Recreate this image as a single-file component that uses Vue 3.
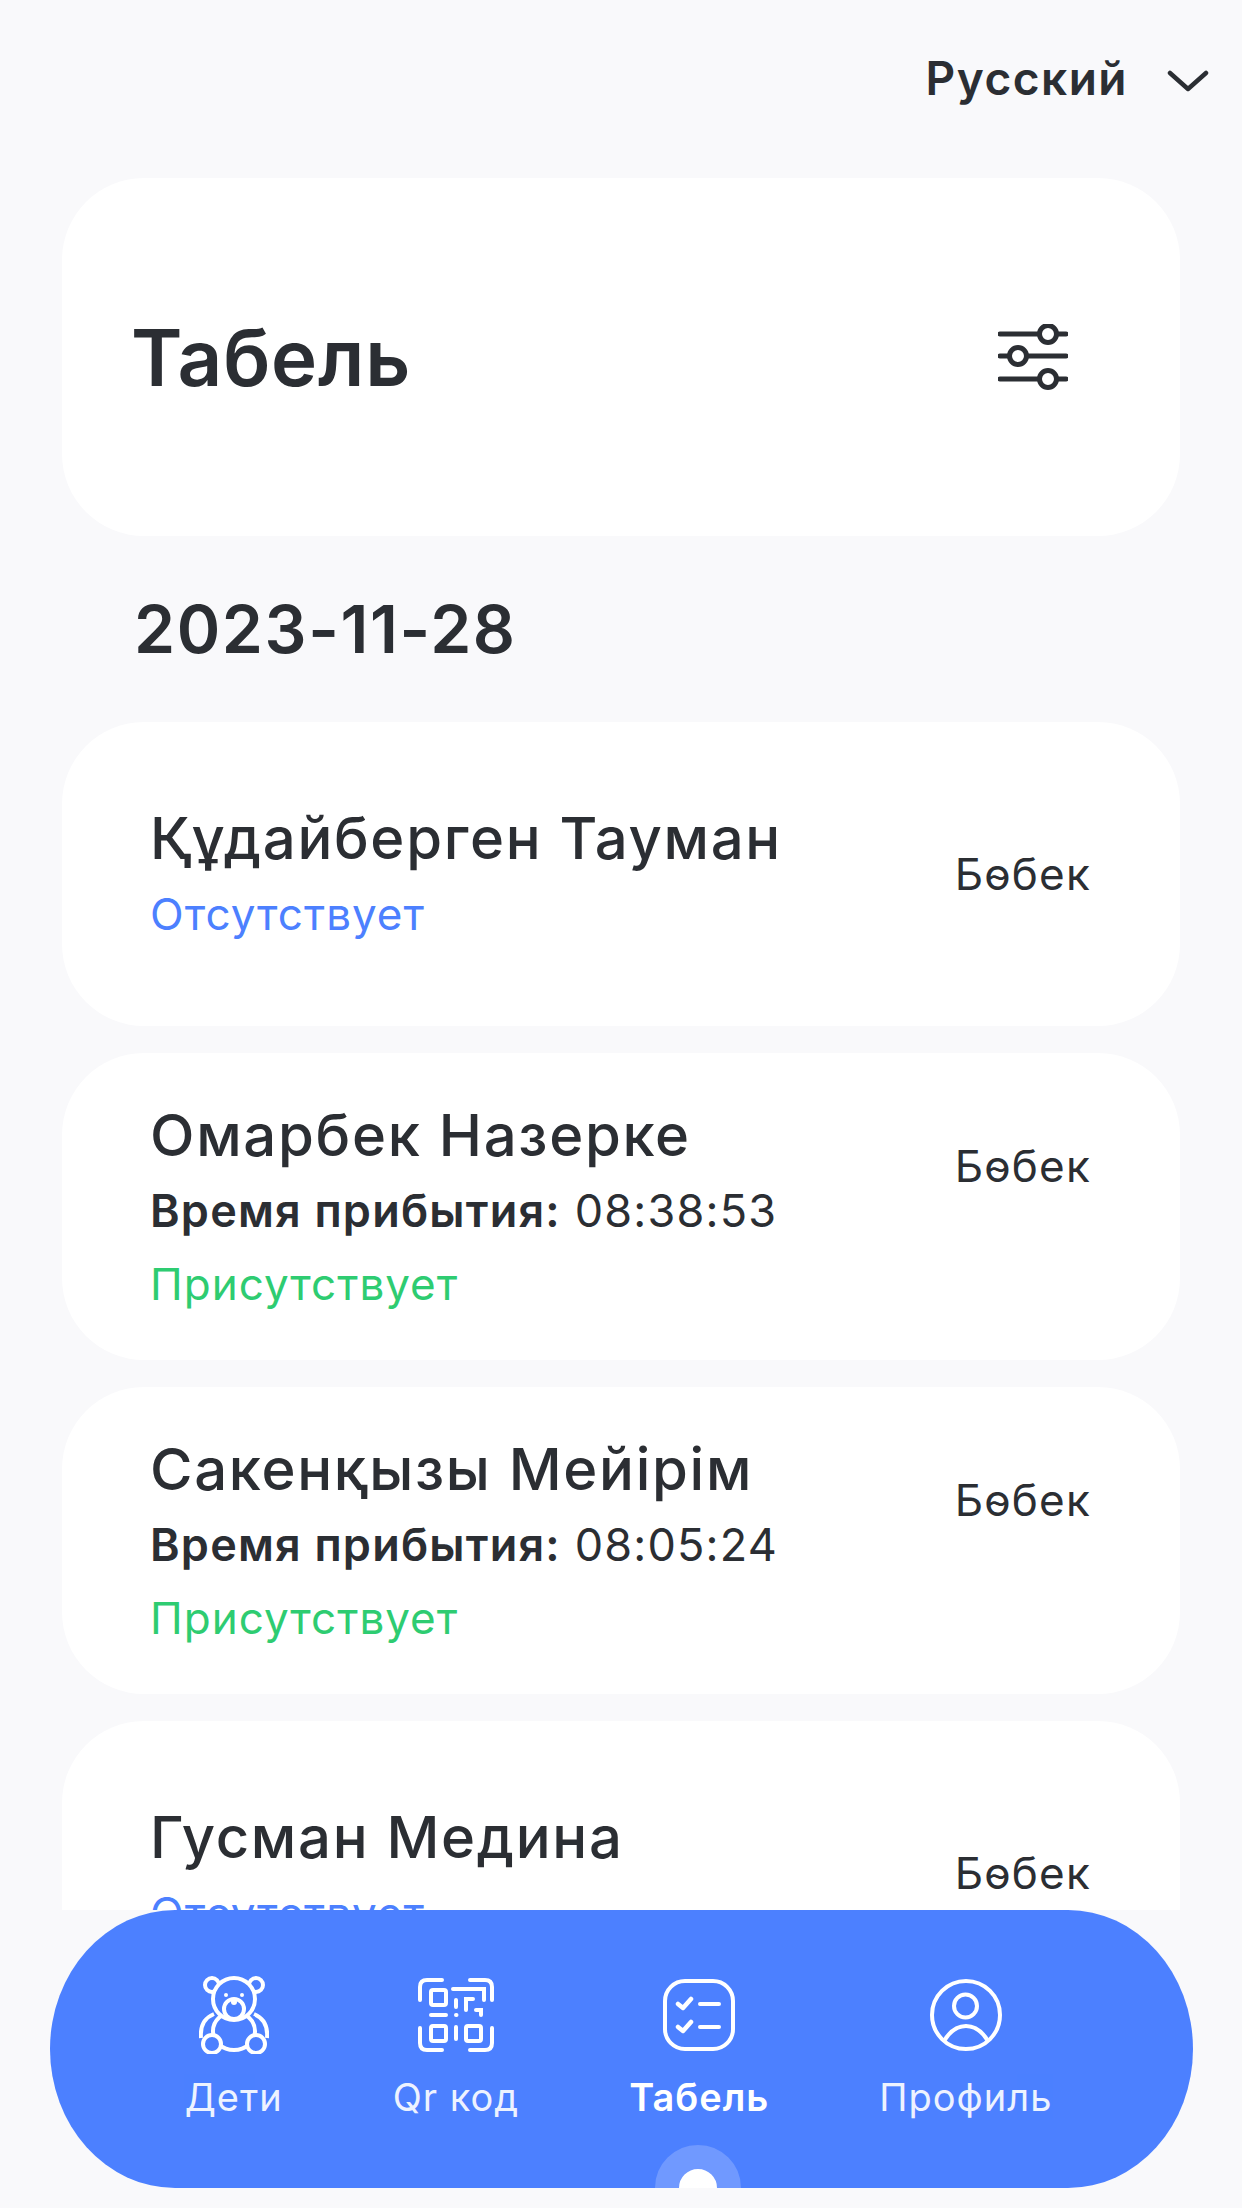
<script setup>
const children = [
  { name: 'Құдайберген Тауман', present: false },
  { name: 'Омарбек Назерке', present: true, time: '08:38:53' },
  { name: 'Сакенқызы Мейірім', present: true, time: '08:05:24' },
  { name: 'Гусман Медина', present: false },
]
</script>

<template>
  <div class="page">
    <div class="scroll">
      <div class="lang">
        <span>Русский</span>
        <svg class="chevron" width="42" height="22" viewBox="0 0 42 22" fill="none" stroke="#2b2e33" stroke-width="4.5" stroke-linecap="round" stroke-linejoin="round">
          <path d="M3 3 L21 19 L39 3" />
        </svg>
      </div>

      <div class="head-card">
        <h1>Табель</h1>
        <svg width="70" height="66" viewBox="0 0 70 66" fill="none" stroke="#2b2e33" stroke-width="5" stroke-linecap="round">
          <path d="M2 10 H41 M59 10 H68 M2 32 H11 M29 32 H68 M2 55 H41 M59 55 H68" />
          <circle cx="50" cy="10" r="8.5" />
          <circle cx="20" cy="32" r="8.5" />
          <circle cx="50" cy="55" r="8.5" />
        </svg>
      </div>

      <div class="date">2023-11-28</div>

      <div class="list">
        <div v-for="child in children" :key="child.name" class="card" :class="{ present: child.present }">
          <div class="row">
            <div class="info">
              <div class="name">{{ child.name }}</div>
              <div v-if="child.present" class="time"><b>Время прибытия:</b> {{ child.time }}</div>
              <div v-else class="status absent">Отсутствует</div>
            </div>
            <div class="group">Бөбек</div>
          </div>
          <div v-if="child.present" class="status here">Присутствует</div>
        </div>
      </div>
    </div>

    <nav class="nav">
      <div class="tab">
        <svg width="70" height="78" viewBox="0 0 70 78" fill="none" stroke="#fff" stroke-width="4">
          <circle cx="13" cy="9" r="7" />
          <circle cx="57" cy="9" r="7" />
          <path d="M15 38 C5 42 1 50 2 62 M55 38 C65 42 69 50 68 62" />
          <ellipse cx="35" cy="55" rx="21" ry="19" />
          <circle cx="35" cy="23" r="21" fill="#4c80ff" />
          <circle cx="35" cy="33" r="10" />
          <circle cx="35" cy="26" r="3" fill="#fff" stroke="none" />
          <circle cx="27" cy="19" r="2" fill="#fff" stroke="none" />
          <circle cx="43" cy="19" r="2" fill="#fff" stroke="none" />
          <circle cx="13" cy="68" r="9" fill="#4c80ff" />
          <circle cx="57" cy="68" r="9" fill="#4c80ff" />
        </svg>
        <span>Дети</span>
      </div>
      <div class="tab">
        <svg width="76" height="74" viewBox="0 0 76 74" fill="none" stroke="#fff" stroke-width="4" stroke-linecap="round">
          <path d="M24 2 H9 Q2 2 2 9 V22 M52 2 H67 Q74 2 74 9 V22 M2 50 V65 Q2 72 9 72 H24 M74 50 V65 Q74 72 67 72 H52" />
          <rect x="13" y="12" width="15" height="15" rx="2" />
          <rect x="13" y="48" width="15" height="15" rx="2" />
          <rect x="48" y="48" width="15" height="15" rx="2" />
          <path d="M38 22 V29 M38 49 V61 M13 37 H28 M38 37 H38.5 M35 11 H66 V22 M48 32 V21 H55 M58 32 H63 V37" />
        </svg>
        <span>Qr код</span>
      </div>
      <div class="tab active">
        <svg width="72" height="72" viewBox="0 0 72 72" fill="none" stroke="#fff" stroke-width="4" stroke-linecap="round" stroke-linejoin="round">
          <rect x="2" y="2" width="68" height="68" rx="20" />
          <path d="M37 25 H56 M37 48 H56" />
          <path d="M15 25 L20 29 L28 20 M15 48 L20 52 L28 43" stroke-width="4.5" />
        </svg>
        <span>Табель</span>
      </div>
      <div class="tab">
        <svg width="72" height="72" viewBox="0 0 72 72" fill="none" stroke="#fff" stroke-width="4">
          <circle cx="36" cy="36" r="34" />
          <circle cx="35.5" cy="27" r="11.5" />
          <path d="M14 62 C20 52 28 47 36 47 C44 47 52 52 58 62" />
        </svg>
        <span>Профиль</span>
      </div>
      <div class="dot"></div>
    </nav>
  </div>
</template>

<style>
html,
body {
  margin: 0;
  background: #f9f9fb;
}
</style>

<style scoped>
.page {
  height: 2208px;
  display: flex;
  flex-direction: column;
  background: #f9f9fb;
  color: #2b2e33;
  font-family: Inter, "Noto Sans", sans-serif;
  overflow: hidden;
}

.scroll {
  height: 1910px;
  flex-shrink: 0;
  overflow: hidden;
}

.lang {
  height: 178px;
  box-sizing: border-box;
  padding: 53px 33px 0 0;
  display: flex;
  justify-content: flex-end;
  align-items: flex-start;
  gap: 39px;
  font-size: 46px;
  line-height: 50px;
  font-weight: 600;
  letter-spacing: 1.5px;
}

.chevron {
  margin-top: 17px;
}

.head-card {
  margin: 0 62px;
  height: 358px;
  background: #fff;
  border-radius: 82px;
  display: flex;
  align-items: center;
  justify-content: space-between;
  padding: 0 112px 0 69px;
  box-sizing: border-box;
}

.head-card h1 {
  margin: 0;
  font-size: 78px;
  font-weight: 600;
  letter-spacing: 0.8px;
}

.date {
  height: 186px;
  line-height: 186px;
  padding-left: 134px;
  font-size: 66px;
  font-weight: 600;
  letter-spacing: 1.6px;
}

.list {
  margin: 0 62px;
  display: flex;
  flex-direction: column;
  gap: 27px;
}

.card {
  flex-shrink: 0;
  height: 304px;
  box-sizing: border-box;
  background: #fff;
  border-radius: 82px;
  padding: 0 89px 0 88px;
  display: flex;
  flex-direction: column;
  justify-content: center;
}

.card.present {
  height: 307px;
  justify-content: flex-start;
  padding-top: 47px;
}

.row {
  display: flex;
  align-items: center;
  justify-content: space-between;
}

.name {
  font-size: 58px;
  line-height: 70px;
  font-weight: 550;
  letter-spacing: 1.7px;
}

.time {
  margin-top: 9px;
  font-size: 45px;
  line-height: 64px;
  letter-spacing: 1.2px;
}

.time b {
  font-weight: 600;
}

.status {
  margin-top: 9px;
  font-size: 44px;
  line-height: 64px;
  letter-spacing: 1px;
}

.absent {
  color: #4c80ff;
}

.here {
  color: #2ecc71;
}

.group {
  font-size: 44px;
  letter-spacing: 1.2px;
}

.present .group {
  margin-bottom: 11px;
}

.nav {
  position: relative;
  height: 278px;
  margin: 0 49px 20px 50px;
  background: #4c80ff;
  border-radius: 125px / 139px;
  overflow: hidden;
  display: flex;
  justify-content: center;
  gap: 110px;
  padding: 66px 6px 0 0;
  box-sizing: border-box;
  color: #fff;
}

.tab {
  display: flex;
  flex-direction: column;
  align-items: center;
  height: 150px;
  font-size: 38px;
  line-height: 46px;
  letter-spacing: 1px;
}

.tab svg {
  height: 78px;
  margin-bottom: 20px;
}

.tab span {
  opacity: 0.9;
}

.tab.active span {
  font-weight: 600;
  opacity: 1;
}

.dot {
  position: absolute;
  left: 605px;
  bottom: -43px;
  width: 86px;
  height: 86px;
  box-sizing: border-box;
  border-radius: 50%;
  background: #fff;
  border: 24px solid #7099ff;
}
</style>
